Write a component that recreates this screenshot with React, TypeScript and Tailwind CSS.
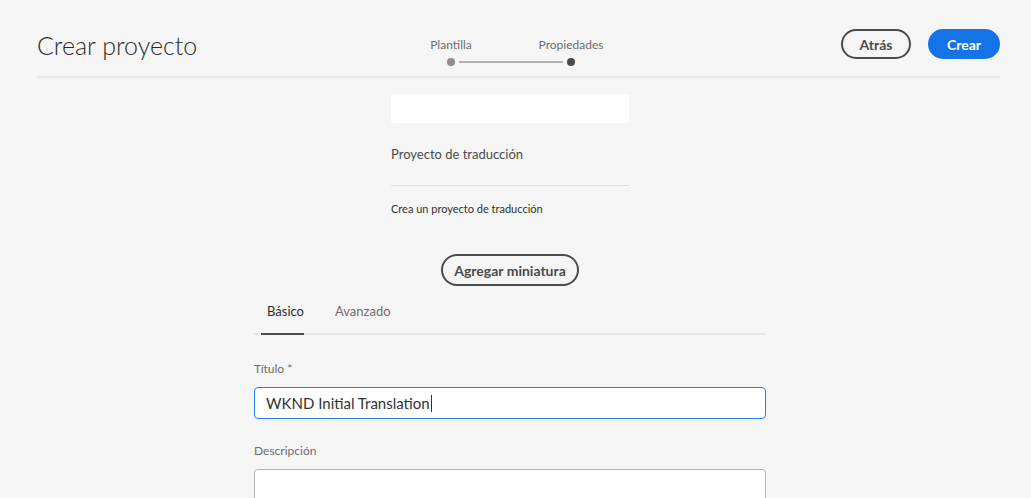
import React from "react";

const FONT = { fontFamily: "Lato, 'Noto Sans', sans-serif" };

function Stepper() {
  const steps = [
    { label: "Plantilla", dot: "bg-[#8e8e8e]" },
    { label: "Propiedades", dot: "bg-[#4b4b4b]" },
  ];
  return (
    <div className="relative flex w-[240px] pt-[37px]">
      {/* connecting line */}
      <div className="absolute left-[68px] right-[68px] top-[61px] h-[2px] bg-[#b3b3b3]" />
      {steps.map((s) => (
        <div key={s.label} className="flex w-[120px] flex-col items-center">
          <span className="text-[12px] leading-[16px] text-[#6e6e6e]">{s.label}</span>
          <span className={`relative mt-[5px] h-[8px] w-[8px] rounded-full ${s.dot}`} />
        </div>
      ))}
    </div>
  );
}

export default function App() {
  return (
    <div className="min-h-screen bg-[#f5f5f5] text-[#323232]" style={FONT}>
      {/* header */}
      <header className="ml-[37px] mr-[31px] flex h-[78px] border-b-2 border-[#e8e8e8]">
        <div className="w-[354px] pt-[28px]">
          <h1 className="text-[25px] font-light leading-[34px] text-[#2c2c2c]">Crear proyecto</h1>
        </div>
        <Stepper />
        <div className="flex flex-1 items-start justify-end gap-[17px] pt-[29px]">
          <button className="h-[30px] w-[70px] rounded-full border-2 border-[#4b4b4b] text-[14px] font-bold text-[#4b4b4b]">
            Atrás
          </button>
          <button className="h-[30px] w-[72px] rounded-full bg-[#1473e6] text-[14px] font-bold text-white">
            Crear
          </button>
        </div>
      </header>

      {/* template card */}
      <div className="ml-[391px] w-[238px] pt-[16px]">
        <div className="h-[29px] rounded-[3px] bg-white" />
        <div className="flex h-[63px] items-center border-b border-[#e1e1e1] pt-[2px] text-[13px] text-[#4b4b4b]">
          Proyecto de traducción
        </div>
        <p className="pt-[15px] text-[11px] leading-[16px] text-[#323232]">Crea un proyecto de traducción</p>
      </div>

      <div className="ml-[441px] pt-[37px]">
        <button className="h-[32px] w-[138px] rounded-full border-2 border-[#4b4b4b] text-[14px] font-bold text-[#4b4b4b]">
          Agregar miniatura
        </button>
      </div>

      {/* form */}
      <div className="ml-[254px] w-[512px] pt-[2px]">
        <div className="flex gap-[31px] border-b-2 border-[#e8e8e8] pl-[7px]">
          <div className="-mb-[2px] border-b-2 border-[#4b4b4b] pb-[12px] pl-[6px] pt-[13px] text-[13px] leading-[20px] text-[#2c2c2c]">
            Básico
          </div>
          <div className="pb-[12px] pt-[13px] text-[13px] leading-[20px] text-[#6e6e6e]">Avanzado</div>
        </div>

        <label className="block pt-[26px] text-[12px] leading-[16px] text-[#6e6e6e]">Título *</label>
        <div className="mt-[10px] flex h-[32px] items-center rounded-[4px] border border-[#2680eb] bg-white px-[11px] text-[15px] text-[#323232]">
          WKND Initial Translation
          <span className="ml-[1px] h-[17px] w-[1px] bg-[#323232]" />
        </div>

        <label className="block pt-[24px] text-[12px] leading-[16px] text-[#6e6e6e]">Descripción</label>
        <div className="mt-[10px] h-[60px] rounded-[4px] border border-[#b3b3b3] bg-white" />
      </div>
    </div>
  );
}
